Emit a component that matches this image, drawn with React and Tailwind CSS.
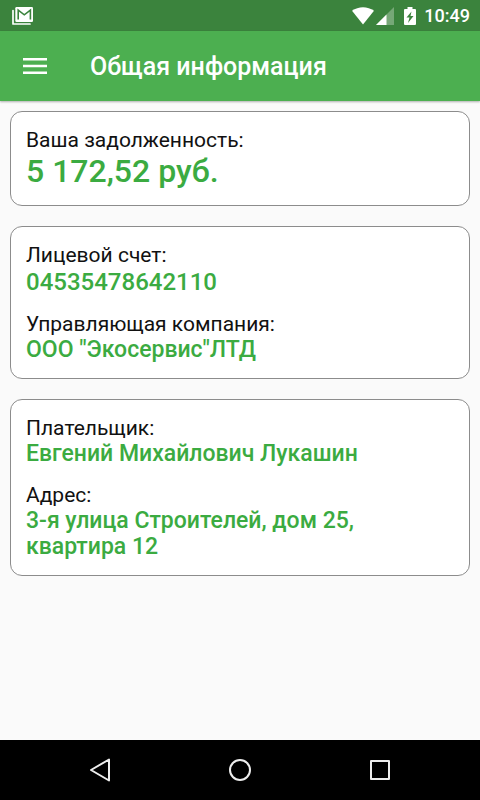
import React from "react";

const cards = [
  [{ label: "Ваша задолженность:", value: "5 172,52 руб.", size: "text-[32px] leading-[37px]" }],
  [
    { label: "Лицевой счет:", value: "04535478642110", size: "text-[24px] leading-[28px]" },
    { label: "Управляющая компания:", value: 'ООО "Экосервис"ЛТД', size: "text-[23px] leading-[26px]" },
  ],
  [
    { label: "Плательщик:", value: "Евгений Михайлович Лукашин", size: "text-[23px] leading-[26px]" },
    { label: "Адрес:", value: "3-я улица Строителей, дом 25, квартира 12", size: "text-[23px] leading-[26px]" },
  ],
];

const StatusBar = () => (
  <div className="flex h-[31px] items-center justify-between bg-[#3b833d] pl-3 pr-[10px] text-white">
    {/* Mail notification */}
    <svg width="22" height="20" viewBox="0 0 22 20">
      <path d="M1 4.500V18h17" fill="none" stroke="#fff" strokeWidth="1.7" strokeLinejoin="round" strokeLinecap="round" />
      <rect x="3.3" y="1" width="17.7" height="15" rx="1.2" fill="#fff" />
      <path d="M6.200 13.500V4.200l6.100 4.600 6.100-4.600v9.300" fill="none" stroke="#3b833d" strokeWidth="1.6" />
    </svg>

    <div className="flex items-center">
      <svg width="22" height="18" viewBox="0 0 22 18">
        <path d="M0 3.700C6.500-1 15.500-1 22 3.700L11 17.500z" fill="#fff" />
      </svg>
      <svg className="ml-[2px]" width="18" height="18" viewBox="0 0 18 18">
        <path d="M0 18 18 0v18z" fill="#fff" fillOpacity="0.3" />
        <path d="M0 18 10.500 7.500V18z" fill="#fff" />
      </svg>
      <svg className="ml-[10px]" width="12" height="18" viewBox="0 0 12 18">
        <path d="M1 2h2.500V0h5v2H11q1 0 1 1v14q0 1-1 1H1q-1 0-1-1V3q0-1 1-1z" fill="#fff" />
        <path d="M7.500 4.500 2.500 10.500H5.500L4 16l5.500-7H6.500z" fill="#3b833d" />
      </svg>
      <span className="ml-2 text-[18px] font-medium leading-6">10:49</span>
    </div>
  </div>
);

const Header = () => (
  <header className="z-10 flex h-[70px] items-center bg-[#4caf50] pl-[23px] text-white shadow-[0_1px_2px_rgba(0,0,0,0.3)]">
    <button aria-label="Меню">
      <svg width="24" height="16" viewBox="0 0 24 16" fill="#fff">
        <path d="M0 0h24v2.500H0zM0 6.700h24v2.500H0zM0 13.400h24v2.500H0z" />
      </svg>
    </button>
    <h1 className="ml-[43px] pt-[2px] text-[25px] font-medium leading-8">Общая информация</h1>
  </header>
);

const Card = ({ items }) => (
  <dl className="flex flex-col gap-4 rounded-xl border border-[#8c8c8c] bg-white px-[15px] pt-4 pb-[15px]">
    {items.map((item) => (
      <div key={item.label}>
        <dt className="text-[21px] leading-[25px] text-[#111]">{item.label}</dt>
        <dd className={`font-medium text-[#3bab41] ${item.size}`}>{item.value}</dd>
      </div>
    ))}
  </dl>
);

const NavigationBar = () => (
  <nav className="flex h-[60px] items-center justify-center gap-[116px] bg-black">
    <button aria-label="Назад">
      <svg width="24" height="24" viewBox="0 0 24 24" fill="none" stroke="#eee" strokeWidth="2" strokeLinejoin="round">
        <path d="M21 1.500v21L3 12z" />
      </svg>
    </button>
    <button aria-label="Домой">
      <svg width="24" height="24" viewBox="0 0 24 24" fill="none" stroke="#eee" strokeWidth="2">
        <circle cx="12" cy="12" r="10" />
      </svg>
    </button>
    <button aria-label="Недавние">
      <svg width="24" height="24" viewBox="0 0 24 24" fill="none" stroke="#eee" strokeWidth="2" strokeLinejoin="round">
        <path d="M3 3h18v18H3z" />
      </svg>
    </button>
  </nav>
);

const App = () => {
  return (
    <div className="flex min-h-screen flex-col bg-[#fafafa] font-['Roboto',sans-serif]">
      <StatusBar />
      <Header />
      <main className="flex flex-1 flex-col gap-5 p-[10px]">
        {cards.map((items, index) => (
          <Card key={index} items={items} />
        ))}
      </main>
      <NavigationBar />
    </div>
  );
};

export default App;
